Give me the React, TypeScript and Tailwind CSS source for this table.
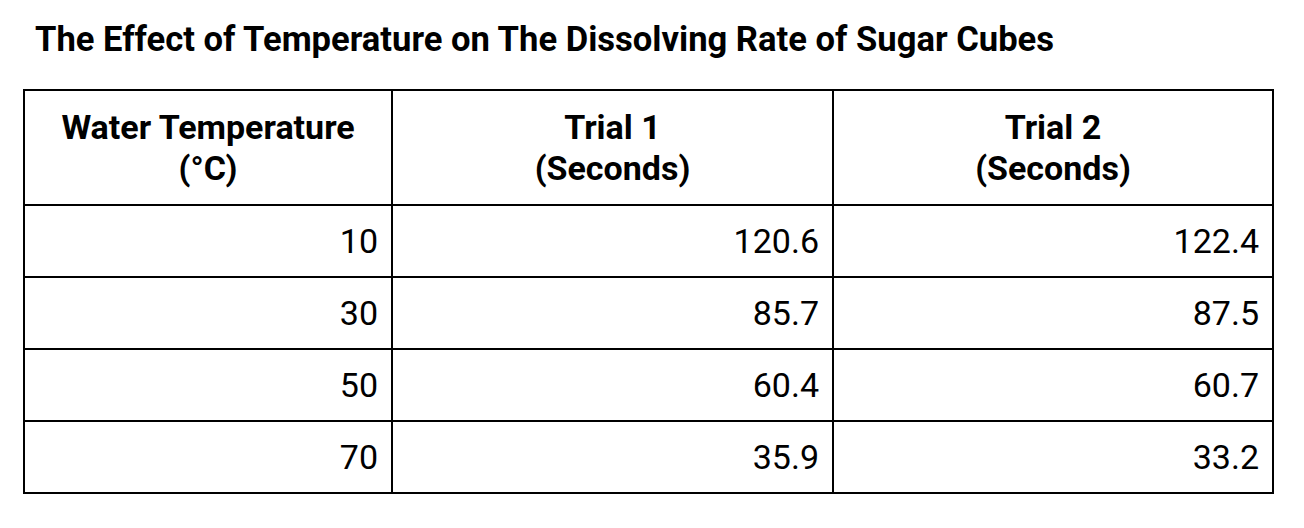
const rows = [
  { temp: '10', t1: '120.6', t2: '122.4' },
  { temp: '30', t1: '85.7', t2: '87.5' },
  { temp: '50', t1: '60.4', t2: '60.7' },
  { temp: '70', t1: '35.9', t2: '33.2' },
]

export default function App() {
  return (
    <div className="min-h-[528px] w-[1304px] bg-white pl-[23px] pt-[18px] text-black [font-family:Roboto,'Liberation_Sans',sans-serif]">
      <h1 className="pl-[12px] text-[34.6px] font-bold leading-[42px]">
        The Effect of Temperature on The Dissolving Rate of Sugar Cubes
      </h1>
      <table className="mt-[29px] w-[1249px] table-fixed border-collapse">
        <colgroup>
          <col className="w-[368px]" />
          <col className="w-[441px]" />
          <col className="w-[440px]" />
        </colgroup>
        <thead>
          <tr className="h-[115px]">
            <th className="border-2 border-black px-3 text-center align-middle text-[34px] font-bold leading-[41px]">
              Water Temperature
              <br />
              (°C)
            </th>
            <th className="border-2 border-black px-3 text-center align-middle text-[34px] font-bold leading-[41px]">
              Trial 1
              <br />
              (Seconds)
            </th>
            <th className="border-2 border-black px-3 text-center align-middle text-[34px] font-bold leading-[41px]">
              Trial 2
              <br />
              (Seconds)
            </th>
          </tr>
        </thead>
        <tbody>
          {rows.map((row) => (
            <tr key={row.temp} className="h-[72px]">
              <td className="border-2 border-black pr-[13px] text-right align-middle text-[34px] leading-[40px]">
                {row.temp}
              </td>
              <td className="border-2 border-black pr-[13px] text-right align-middle text-[34px] leading-[40px]">
                {row.t1}
              </td>
              <td className="border-2 border-black pr-[13px] text-right align-middle text-[34px] leading-[40px]">
                {row.t2}
              </td>
            </tr>
          ))}
        </tbody>
      </table>
    </div>
  )
}
